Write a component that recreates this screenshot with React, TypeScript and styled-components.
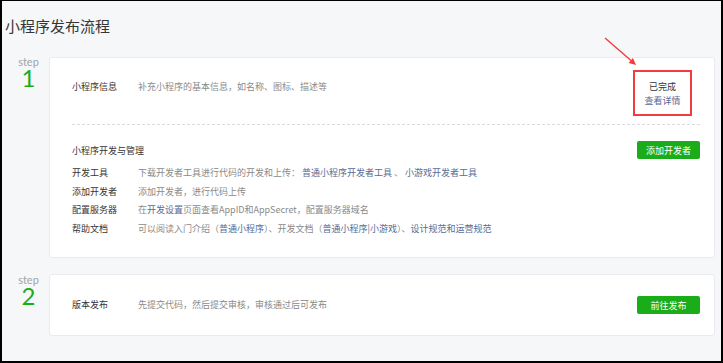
import React from 'react';
import styled, { createGlobalStyle } from 'styled-components';

const GlobalStyle = createGlobalStyle`
  html, body {
    margin: 0;
    padding: 0;
    background: #fff;
  }
  body {
    font-family: "Noto Sans CJK SC", "Noto Sans", sans-serif;
  }
`;

const Frame = styled.div`
  position: relative;
  width: 723px;
  height: 363px;
  box-sizing: border-box;
  border: 2px solid #000;
  border-top-width: 1px;
  background: #f6f7f9;
  overflow: hidden;
`;

const PageTitle = styled.h1`
  margin: 0;
  padding: 15px 0 0 3px;
  font-size: 15px;
  line-height: 20px;
  font-weight: normal;
  color: #353535;
`;

const StepList = styled.div`
  display: flex;
  flex-direction: column;
  gap: 16px;
  margin-top: 21px;
`;

const StepRow = styled.div`
  display: flex;
  align-items: flex-start;
  margin-right: 6px;
`;

const StepMarker = styled.div<{ $offset: number }>`
  width: 47px;
  box-sizing: border-box;
  padding: ${(p) => p.$offset}px 0 0 6px;
  display: flex;
  flex-direction: column;
  align-items: center;
  font-family: Lato, "Open Sans", sans-serif;
`;

const StepLabel = styled.span`
  font-size: 11px;
  line-height: 10px;
  color: #a3a3a3;
`;

const StepNumber = styled.span`
  font-size: 24px;
  line-height: 22px;
  color: #1aad19;
`;

const Card = styled.div`
  flex: 1;
  background: #fff;
  border: 1px solid #eaebee;
  border-radius: 3px;
  padding: 0 14px 0 22px;
`;

const InfoSection = styled.div`
  display: flex;
  align-items: flex-start;
  padding: 12px 0 8px;
  border-bottom: 1px dashed #dcdcdc;
`;

const Label = styled.div`
  width: 66px;
  flex-shrink: 0;
  font-size: 9px;
  line-height: 18.5px;
  color: #353535;
  white-space: nowrap;
`;

const Desc = styled.div`
  flex: 1;
  font-size: 9px;
  line-height: 18.5px;
  color: #8a8a8a;
  white-space: nowrap;
`;

const InfoLabel = styled(Label)`
  padding-top: 8px;
`;

const InfoDesc = styled(Desc)`
  padding-top: 8px;
`;

const StatusBox = styled.div`
  width: 59px;
  box-sizing: border-box;
  margin-right: 8px;
  padding: 8px 0 6px;
  border: 2px solid #f23c3c;
  display: flex;
  flex-direction: column;
  align-items: center;
  font-size: 9px;
  line-height: 14px;
`;

const StatusText = styled.span`
  color: #353535;
`;

const Link = styled.a`
  color: #576b95;
  text-decoration: none;
  cursor: pointer;
`;

const ManageSection = styled.div`
  padding: 16px 0 19px;
`;

const SectionHeader = styled.div`
  display: flex;
  justify-content: space-between;
  align-items: center;
  margin-bottom: 5px;
`;

const SectionTitle = styled.span`
  font-size: 9px;
  color: #353535;
`;

const Row = styled.div`
  display: flex;
`;

const GreenButton = styled.button`
  width: 63px;
  height: 18px;
  padding: 0;
  border: none;
  border-radius: 2px;
  background: #1aad19;
  color: #fff;
  font-family: inherit;
  font-size: 9px;
  cursor: pointer;
`;

const ReleaseRow = styled.div`
  display: flex;
  align-items: center;
  height: 60px;
`;

const Overlay = styled.svg`
  position: absolute;
  left: 0;
  top: 0;
  width: 100%;
  height: 100%;
  pointer-events: none;
`;

const manageRows: { label: string; desc: React.ReactNode }[] = [
  {
    label: '开发工具',
    desc: (
      <>
        下载开发者工具进行代码的开发和上传： <Link>普通小程序开发者工具</Link> 、 <Link>小游戏开发者工具</Link>
      </>
    ),
  },
  { label: '添加开发者', desc: '添加开发者，进行代码上传' },
  {
    label: '配置服务器',
    desc: (
      <>
        在<Link>开发设置</Link>页面查看AppID和AppSecret，配置服务器域名
      </>
    ),
  },
  {
    label: '帮助文档',
    desc: (
      <>
        可以阅读入门介绍（<Link>普通小程序</Link>）、开发文档（<Link>普通小程序|小游戏</Link>）、<Link>设计规范和运营规范</Link>
      </>
    ),
  },
];

const App = () => {
  return (
    <Frame>
      <GlobalStyle />
      <PageTitle>小程序发布流程</PageTitle>

      <StepList>
        <StepRow>
          <StepMarker $offset={0}>
            <StepLabel>step</StepLabel>
            <StepNumber>1</StepNumber>
          </StepMarker>
          <Card>
            <InfoSection>
              <InfoLabel>小程序信息</InfoLabel>
              <InfoDesc>补充小程序的基本信息，如名称、图标、描述等</InfoDesc>
              <StatusBox>
                <StatusText>已完成</StatusText>
                <Link>查看详情</Link>
              </StatusBox>
            </InfoSection>

            <ManageSection>
              <SectionHeader>
                <SectionTitle>小程序开发与管理</SectionTitle>
                <GreenButton>添加开发者</GreenButton>
              </SectionHeader>
              {manageRows.map((row) => (
                <Row key={row.label}>
                  <Label>{row.label}</Label>
                  <Desc>{row.desc}</Desc>
                </Row>
              ))}
            </ManageSection>
          </Card>
        </StepRow>

        <StepRow>
          <StepMarker $offset={1}>
            <StepLabel>step</StepLabel>
            <StepNumber>2</StepNumber>
          </StepMarker>
          <Card>
            <ReleaseRow>
              <Label>版本发布</Label>
              <Desc>先提交代码，然后提交审核，审核通过后可发布</Desc>
              <GreenButton>前往发布</GreenButton>
            </ReleaseRow>
          </Card>
        </StepRow>
      </StepList>

      {/* annotation arrow pointing at the status box */}
      <Overlay>
        <line x1="603" y1="37" x2="629" y2="59.5" stroke="#f23c3c" strokeWidth="1.4" />
        <polygon points="634,64 626.6,61.9 630.9,56.9" fill="#f23c3c" />
      </Overlay>
    </Frame>
  );
};

export default App;
